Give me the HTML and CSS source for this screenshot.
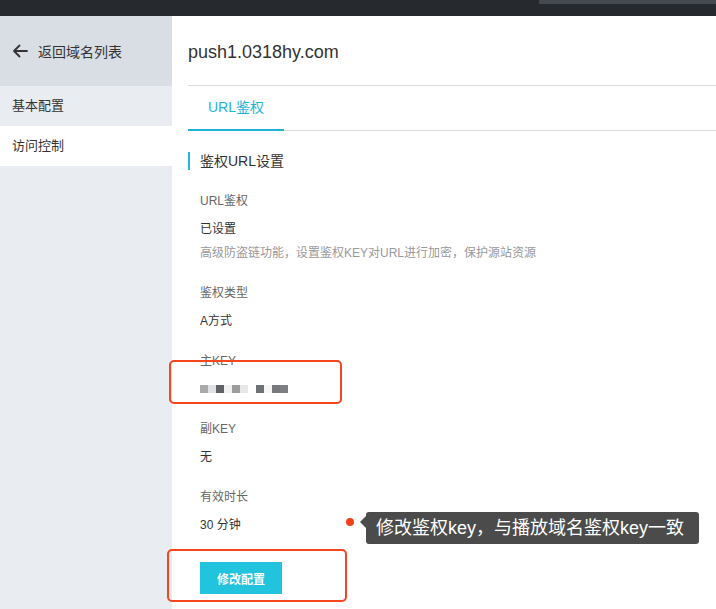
FILE: index.html
```html
<!DOCTYPE html>
<html lang="zh-CN">
<head>
  <meta charset="UTF-8" />
  <meta name="viewport" content="width=device-width, initial-scale=1.0" />
  <title>URL鉴权 - push1.0318hy.com</title>
  <link rel="stylesheet" href="styles.css">
</head>
<body>
  <div class="page">
    <div class="topbar"><div class="topbar-strip"></div></div>
    <div class="layout">
      <div class="sidebar">
        <div class="back-row">
          <svg class="back-icon" width="16" height="16" viewBox="0 0 16 16">
            <path d="M15 8H2M7.5 2.5L2 8l5.5 5.5" fill="none" stroke="#333" stroke-width="1.8" stroke-linecap="round" stroke-linejoin="round"/>
          </svg>
          <span>返回域名列表</span>
        </div>
        <div class="nav-item">基本配置</div>
        <div class="nav-item active">访问控制</div>
      </div>

      <div class="main">
        <div class="domain-title">push1.0318hy.com</div>
        <div class="tabs">
          <div class="tab active">URL鉴权</div>
        </div>

        <div class="section-title">鉴权URL设置</div>

        <div class="field">
          <div class="field-label">URL鉴权</div>
          <div class="field-value">已设置</div>
          <div class="field-desc">高级防盗链功能，设置鉴权KEY对URL进行加密，保护源站资源</div>
        </div>
        <div class="field">
          <div class="field-label">鉴权类型</div>
          <div class="field-value">A方式</div>
        </div>
        <div class="field">
          <div class="field-label">主KEY</div>
          <div class="field-value masked">
            <span class="px px-a"></span><span class="px px-b"></span><span class="px px-c"></span><span class="px px-d"></span><span class="px px-e"></span><span class="px px-f"></span><span class="px px-g"></span><span class="px px-h"></span><span class="px px-i"></span><span class="px px-j"></span><span class="px px-k"></span>
          </div>
        </div>
        <div class="field">
          <div class="field-label">副KEY</div>
          <div class="field-value">无</div>
        </div>
        <div class="field">
          <div class="field-label">有效时长</div>
          <div class="field-value">30 分钟</div>
        </div>

        <button class="primary-button">修改配置</button>
      </div>
    </div>

    <!-- annotations -->
    <div class="mark mark-key"></div>
    <div class="mark mark-button"></div>
    <div class="note-dot"></div>
    <div class="note">修改鉴权key，与播放域名鉴权key一致</div>
  </div>
</body>
</html>
```

FILE: styles.css
```css
* { box-sizing: border-box; }
body {
  margin: 0;
  font-family: "Liberation Sans", "Noto Sans CJK SC", sans-serif;
  color: #333;
  background: #fff;
}
.page {
  position: relative;
  width: 716px;
  height: 609px;
  overflow: hidden;
}
.topbar {
  height: 16px;
  background: #262a2f;
  display: flex;
  justify-content: flex-end;
}
.topbar-strip {
  width: 177px;
  height: 4px;
  background: #454a50;
}
.layout {
  display: flex;
  height: 593px;
}
.sidebar {
  width: 172px;
  flex-shrink: 0;
  background: #e9ecf0;
}
.back-row {
  height: 70px;
  background: #d9dde4;
  display: flex;
  align-items: center;
  gap: 10px;
  padding-left: 12px;
  font-size: 14px;
}
.back-icon { display: block; }
.nav-item {
  height: 40px;
  line-height: 40px;
  padding-left: 12px;
  font-size: 13px;
}
.nav-item.active {
  background: #fff;
}
.main {
  flex: 1;
  padding-left: 16px;
}
.domain-title {
  font-size: 18px;
  line-height: 20px;
  padding: 26px 0 23px;
  border-bottom: 1px solid #dcdcdc;
}
.tabs {
  display: flex;
  border-bottom: 1px solid #dcdcdc;
}
.tab {
  padding: 0 20px;
  line-height: 43px;
  font-size: 14px;
  margin-bottom: -1px;
  border-bottom: 2px solid transparent;
}
.tab.active {
  color: #1fb4d6;
  border-bottom-color: #1fb4d6;
}
.section-title {
  margin-top: 21px;
  border-left: 2px solid #22b8d9;
  padding-left: 10px;
  font-size: 14px;
  line-height: 18px;
  margin-bottom: 21px;
}
.field {
  padding-left: 12px;
  margin-bottom: 20px;
}
.field-label {
  font-size: 12px;
  line-height: 20px;
  color: #666;
}
.field-value {
  margin-top: 8px;
  font-size: 12px;
  line-height: 20px;
  color: #333;
}
.field-desc {
  margin-top: 4px;
  font-size: 12px;
  line-height: 20px;
  color: #999;
}
.masked {
  display: flex;
  align-items: center;
  height: 20px;
}
.px {
  width: 8px;
  height: 8px;
}
.px-a { background: #aaaaaa; }
.px-b { background: #dfe1e4; }
.px-c { background: #5f6368; }
.px-d { background: #f1f1f1; }
.px-e { background: #9c9c9c; }
.px-f { background: #e8e8e8; }
.px-g { background: #ffffff; }
.px-h { background: #6e7275; }
.px-i { background: #f6f6f6; }
.px-j { background: #76787b; }
.px-k { background: #7d7f82; }
.primary-button {
  margin: 7px 0 0 12px;
  width: 82px;
  height: 32px;
  border: none;
  padding: 0;
  background: #22c3dc;
  color: #fff;
  font-family: inherit;
  font-size: 12px;
  font-weight: bold;
  cursor: pointer;
}
.mark {
  position: absolute;
  border: 2px solid #f5461e;
  border-radius: 5px;
}
.mark-key {
  left: 169px;
  top: 360px;
  width: 173px;
  height: 44px;
}
.mark-button {
  left: 167px;
  top: 549px;
  width: 180px;
  height: 53px;
}
.note-dot {
  position: absolute;
  left: 346px;
  top: 518px;
  width: 8px;
  height: 8px;
  border-radius: 50%;
  background: #f2401c;
}
.note {
  position: absolute;
  left: 366px;
  top: 512px;
  width: 333px;
  height: 32px;
  line-height: 32px;
  padding-left: 10px;
  background: #4b4b4b;
  border-radius: 3px;
  color: #fff;
  font-size: 18px;
  white-space: nowrap;
}
.note::before {
  content: "";
  position: absolute;
  left: -6px;
  top: 4px;
  border-style: solid;
  border-width: 6px 6px 6px 0;
  border-color: transparent #4b4b4b transparent transparent;
}
```
